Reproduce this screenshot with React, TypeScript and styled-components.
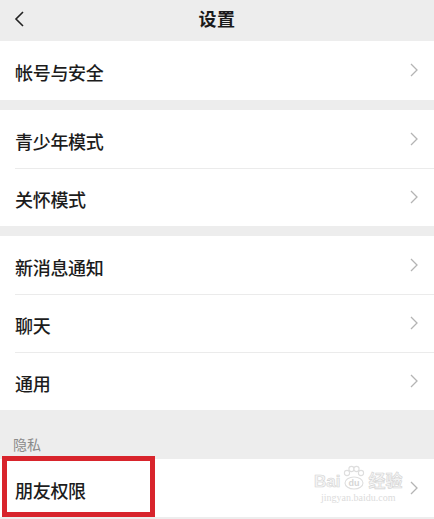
import React from "react";
import styled, { createGlobalStyle } from "styled-components";

const GlobalStyle = createGlobalStyle`
  html, body {
    margin: 0;
    padding: 0;
    background: #ededed;
  }
  body {
    font-family: "Noto Sans CJK SC", "Noto Sans", sans-serif;
    -webkit-font-smoothing: antialiased;
  }
`;

interface SettingsGroup {
  title?: string;
  items: string[];
}

const groups: SettingsGroup[] = [
  { items: ["帐号与安全"] },
  { items: ["青少年模式", "关怀模式"] },
  { items: ["新消息通知", "聊天", "通用"] },
  { title: "隐私", items: ["朋友权限"] },
];

const Chevron = () => (
  <ChevronSvg width="8" height="14" viewBox="0 0 8 14">
    <path d="M1 1l6 6-6 6" fill="none" stroke="#b4b4b4" strokeWidth="1.3" />
  </ChevronSvg>
);

const BackArrow = () => (
  <svg width="12" height="16" viewBox="0 0 12 16">
    <path d="M10 1L3 8l7 7" fill="none" stroke="#222" strokeWidth="1.6" />
  </svg>
);

const Watermark = () => (
  <WatermarkBox>
    <WatermarkTop>
      <span>Bai</span>
      <svg width="24" height="26" viewBox="0 0 24 26">
        <g fill="#fff" stroke="#dedede" strokeWidth="1.1">
          <circle cx="5" cy="8" r="2.6" />
          <circle cx="9.5" cy="4" r="2.6" />
          <circle cx="14.5" cy="4" r="2.6" />
          <circle cx="19" cy="8" r="2.6" />
          <ellipse cx="12" cy="18" rx="9" ry="6" />
        </g>
        <text x="12" y="21" fontSize="9" textAnchor="middle" fill="#d6d6d6" fontFamily="Liberation Sans, sans-serif">
          du
        </text>
      </svg>
      <span>经验</span>
    </WatermarkTop>
    <WatermarkUrl>jingyan.baidu.com</WatermarkUrl>
  </WatermarkBox>
);

export default function App() {
  return (
    <Page>
      <GlobalStyle />
      <Header>
        <BackButton>
          <BackArrow />
        </BackButton>
        <Title>设置</Title>
      </Header>
      {groups.map((group, gi) => (
        <Group key={gi} $first={gi === 0}>
          {group.title && <SectionLabel>{group.title}</SectionLabel>}
          <List>
            {group.items.map((item) => (
              <Row key={item} $tall={gi === 0}>
                {item === "朋友权限" && <Highlight />}
                <RowLabel>{item}</RowLabel>
                {item === "朋友权限" && <Watermark />}
                <Chevron />
              </Row>
            ))}
          </List>
        </Group>
      ))}
    </Page>
  );
}

const Page = styled.div`
  width: 434px;
  min-height: 519px;
  background: #ededed;
  overflow: hidden;
`;

const Header = styled.div`
  position: relative;
  height: 41px;
  display: flex;
  align-items: center;
  justify-content: center;
  background: #ededed;
`;

const BackButton = styled.div`
  position: absolute;
  left: 13px;
  top: 11px;
  display: flex;
`;

const Title = styled.div`
  font-size: 18px;
  font-weight: 700;
  color: #1a1a1a;
  margin-top: -6px;
  letter-spacing: 0.5px;
`;

const Group = styled.div<{ $first?: boolean }>`
  margin-top: ${(p) => (p.$first ? "0" : "10px")};
`;

const SectionLabel = styled.div`
  height: 49px;
  margin-top: -10px;
  box-sizing: border-box;
  padding: 24px 0 0 13px;
  font-size: 14px;
  color: #8a8a8a;
`;

const List = styled.div`
  background: #fff;
`;

const Row = styled.div<{ $tall?: boolean }>`
  position: relative;
  height: ${(p) => (p.$tall ? "59px" : "58px")};
  box-sizing: border-box;
  display: flex;
  align-items: center;
  padding: 3px 15px 0;

  & + &::before {
    content: "";
    position: absolute;
    left: 15px;
    right: 0;
    top: 0;
    height: 1px;
    background: #ebebeb;
  }
`;

const RowLabel = styled.div`
  flex: 1;
  font-size: 18px;
  font-weight: 500;
  color: #1c1c1c;
  letter-spacing: -0.3px;
`;

const ChevronSvg = styled.svg`
  margin-right: 1px;
  margin-top: -4px;
`;

const Highlight = styled.div`
  position: absolute;
  left: 2px;
  top: -3px;
  width: 153px;
  height: 61px;
  box-sizing: border-box;
  border: 5px solid #d8242c;
`;

const WatermarkBox = styled.div`
  position: absolute;
  left: 314px;
  top: 6px;
  display: flex;
  flex-direction: column;
  align-items: center;
  pointer-events: none;
`;

const WatermarkTop = styled.div`
  display: flex;
  align-items: flex-end;
  gap: 2px;
  font-family: "Liberation Sans", "Noto Sans CJK SC", sans-serif;
  font-size: 17px;
  line-height: 18px;
  color: #f4f4f4;
  font-weight: 700;
  -webkit-text-stroke: 0.6px #d4d4d4;
`;

const WatermarkUrl = styled.div`
  font-family: "Liberation Serif", serif;
  font-size: 10px;
  color: #dcdcdc;
  margin-top: 1px;
`;
